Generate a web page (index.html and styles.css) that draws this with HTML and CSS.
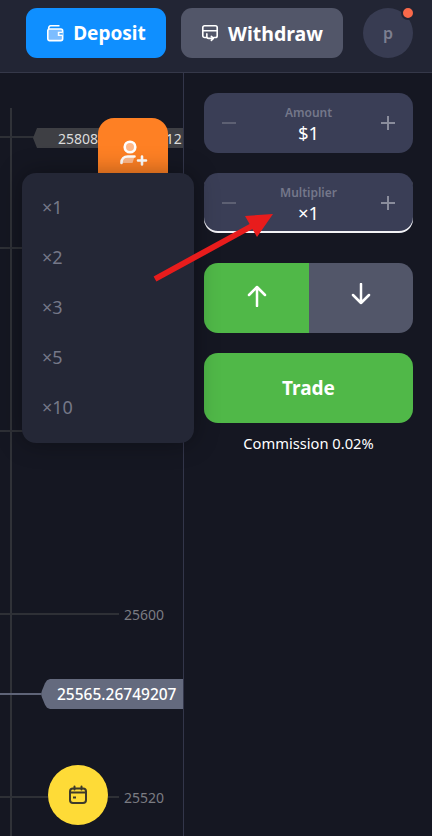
FILE: index.html
```html
<!DOCTYPE html>
<html lang="en">
<head>
<meta charset="utf-8">
<title>Trade</title>
<link rel="stylesheet" href="styles.css">
</head>
<body>
<div class="app">
  <header class="header">
    <button class="btn btn-blue">
      <svg class="btn-icon" viewBox="0 0 20 20" width="18" height="18" fill="none" stroke="#fff" stroke-width="1.800"><path d="M3 6.200V4.500C3 3.200 4 2 5 2h10"/><rect x="2" y="5.500" width="16.500" height="13" rx="2" fill="#7dbdff"/><path d="M18.500 9.500h-4.500v3h4.500" fill="#0f8fff"/></svg>
      <span>Deposit</span>
    </button>
    <button class="btn btn-gray">
      <svg class="btn-icon" viewBox="0 0 20 20" width="18" height="18" fill="none" stroke="#fff" stroke-width="1.800" stroke-linecap="round" stroke-linejoin="round"><path d="M6 15H4a2 2 0 0 1-2-2V4a2 2 0 0 1 2-2h12a2 2 0 0 1 2 2v9a2 2 0 0 1-2 2h-2"/><path d="M2 7.500h16"/><path d="M6.500 11v3a2 2 0 0 0 2 2h5"/><path d="M11.500 13.800l2.200 2.200-2.200 2.200"/></svg>
      <span>Withdraw</span>
    </button>
    <div class="avatar">p<span class="dot"></span></div>
  </header>
  <main class="main">
    <section class="chart">
      <div class="axis"></div>
      <div class="gridline g1"></div>
      <div class="gridline g2"></div>
      <div class="gridline g3"></div>
      <div class="gridline g4"></div>
      <div class="gridline g5"></div>
      <div class="tick t4">25600</div>
      <div class="tick t5">25520</div>
      <div class="tag tag-old">25808.9123456712</div>
      <div class="price-line"></div>
      <div class="tag tag-now">25565.26749207</div>
      <button class="invite">
        <svg viewBox="0 0 30 28" width="30" height="28" fill="none" stroke="#fff" stroke-width="2.600" stroke-linecap="round"><circle cx="12" cy="8" r="5.300" fill="#ffb98a"/><path d="M3.500 24v-.500c0-3.500 2.500-6 6-6h7l-2 6.500z" fill="#ffb98a" stroke="none"/><path d="M3.500 24v-.500c0-3.500 2.500-6 6-6h7"/><path d="M20 21.500h8M24 17.500v8"/></svg>
      </button>
      <button class="calendar">
        <svg viewBox="0 0 20 20" width="20" height="20" fill="none" stroke="#3d3a2b" stroke-width="2" stroke-linecap="round"><rect x="2" y="3.500" width="16" height="14.500" rx="3"/><path d="M2 7.500h16M6.500 1.500v3M13.500 1.500v3"/><rect x="5" y="11.500" width="3" height="2" fill="#3d3a2b" stroke="none"/></svg>
      </button>
    </section>
    <aside class="panel">
      <div class="stepper">
        <span class="step minus"></span>
        <div class="step-body"><span class="step-label">Amount</span><span class="step-value">$1</span></div>
        <span class="step plus"></span>
      </div>
      <div class="stepper stepper-open">
        <span class="step minus"></span>
        <div class="step-body"><span class="step-label">Multiplier</span><span class="step-value">×1</span></div>
        <span class="step plus"></span>
      </div>
      <div class="direction">
        <button class="dir dir-up">
          <svg viewBox="0 0 20 22" width="20" height="22" fill="none" stroke="#fff" stroke-width="2.500" stroke-linecap="round" stroke-linejoin="round"><path d="M10 21V2M2 10l8-8 8 8"/></svg>
        </button>
        <button class="dir dir-down">
          <svg viewBox="0 0 20 22" width="20" height="22" fill="none" stroke="#fff" stroke-width="2.500" stroke-linecap="round" stroke-linejoin="round"><path d="M10 1V20M2 12l8 8 8-8"/></svg>
        </button>
      </div>
      <button class="trade">Trade</button>
      <p class="commission">Commission 0.02%</p>
    </aside>
  </main>
  <ul class="menu">
    <li>×1</li>
    <li>×2</li>
    <li>×3</li>
    <li>×5</li>
    <li>×10</li>
  </ul>
  <svg class="arrow" viewBox="0 0 432 836" width="432" height="836"><path d="M153.600 276.400L249.600 223.900 245 216 273 214 257 237 252.400 229.100 156.400 281.600z" fill="#e81c1c"/></svg>
</div>
</body>
</html>
```

FILE: styles.css
```css
* { box-sizing: border-box; }
html, body { margin: 0; padding: 0; }
body {
  width: 432px;
  height: 836px;
  overflow: hidden;
  background: #151722;
  font-family: "Noto Sans", "Open Sans", sans-serif;
  color: #fff;
}
button { font-family: inherit; border: 0; padding: 0; color: inherit; }
.app { position: relative; width: 432px; height: 836px; display: flex; flex-direction: column; overflow: hidden; }

.header {
  flex: none;
  height: 73px;
  padding: 8px 19px 0 26px;
  display: flex;
  align-items: flex-start;
  background: #222534;
  border-bottom: 1px solid #353849;
}
.btn {
  height: 50px;
  border-radius: 11px;
  display: flex;
  align-items: center;
  justify-content: center;
  gap: 9px;
  font-size: 19px;
  font-weight: 700;
}
.btn-blue { width: 140px; background: #0f8fff; }
.btn-gray { width: 162px; margin-left: 15px; background: #525669; font-size: 19.500px; }
.avatar {
  position: relative;
  width: 50px;
  height: 50px;
  margin-left: 20px;
  border-radius: 50%;
  background: #383c52;
  color: #7c7f90;
  font-size: 16px;
  font-weight: 600;
  display: flex;
  align-items: center;
  justify-content: center;
}
.dot {
  position: absolute;
  top: -2px;
  right: -2px;
  width: 14px;
  height: 14px;
  border-radius: 50%;
  background: #f9694a;
  border: 2px solid #222534;
}

.main { flex: 1; display: flex; min-height: 0; }
.chart {
  position: relative;
  flex: none;
  width: 184px;
  border-right: 1px solid #33364a;
  overflow: hidden;
}
.axis { position: absolute; left: 10px; top: 35px; bottom: 0; width: 2px; background: #303238; }
.gridline { position: absolute; left: 0; width: 119px; height: 2px; background: #2e3036; }
.g1 { top: 63px; }
.g2 { top: 174px; }
.g3 { top: 357px; }
.g4 { top: 540px; }
.g5 { top: 723px; }
.tick {
  position: absolute;
  left: 124px;
  font-size: 14px;
  line-height: 16px;
  color: #7b7c82;
}
.t4 { top: 534px; }
.t5 { top: 717px; }
.tag {
  position: absolute;
  display: flex;
  align-items: center;
  color: #fff;
  white-space: nowrap;
  overflow: hidden;
}
.tag-old {
  left: 33px;
  top: 55px;
  width: 150px;
  height: 20px;
  padding-left: 25px;
  font-size: 14px;
  color: #dcdcdc;
  background: #3e3f44;
  clip-path: polygon(0 50%, 4px 0, 100% 0, 100% 100%, 4px 100%);
}
.price-line { position: absolute; left: 0; top: 620px; width: 41px; height: 2px; background: #5f6478; }
.tag-now {
  left: 41px;
  top: 606px;
  width: 142px;
  height: 30px;
  padding-left: 16px;
  font-size: 15.500px;
  font-weight: 500;
  background: #646a7e;
  clip-path: polygon(0 50%, 1px 38%, 4px 14%, 6px 4%, 9px 0, 100% 0, 100% 100%, 9px 100%, 6px 96%, 4px 86%, 1px 62%);
}
.invite {
  position: absolute;
  left: 98px;
  top: 45px;
  width: 70px;
  height: 70px;
  border-radius: 16px;
  background: #fe8024;
  display: flex;
  justify-content: center;
  padding-top: 21px;
}
.calendar {
  position: absolute;
  left: 48px;
  top: 692px;
  width: 60px;
  height: 60px;
  border-radius: 50%;
  background: #fedb37;
  display: flex;
  align-items: center;
  justify-content: center;
}

.panel {
  flex: 1;
  padding: 20px 19px 0 20px;
  display: flex;
  flex-direction: column;
}
.stepper {
  height: 60px;
  margin-bottom: 20px;
  padding: 0 18px;
  border-radius: 14px;
  background: #3a3e56;
  display: flex;
  align-items: center;
  justify-content: space-between;
}
.stepper-open { box-shadow: inset 0 -2px 0 #f2f2f5; margin-bottom: 30px; }
.step { position: relative; width: 14px; height: 14px; flex: none; }
.step::before,
.step::after { content: ""; position: absolute; background: #8a8d9c; }
.step::before { left: 0; right: 0; top: 6px; height: 2px; }
.plus::after { top: 0; bottom: 0; left: 6px; width: 2px; }
.minus::before { background: #5d6073; }
.minus::after { display: none; }
.step-body { display: flex; flex-direction: column; align-items: center; gap: 1px; padding-top: 2px; }
.step-label { font-size: 12px; line-height: 16px; font-weight: 600; color: #74778a; }
.step-value { font-size: 18.500px; line-height: 22px; color: #fff; }
.direction { height: 70px; margin-bottom: 20px; display: flex; border-radius: 14px; overflow: hidden; }
.dir { display: flex; align-items: center; justify-content: center; }
.dir-up { width: 105px; padding-bottom: 5px; background: #50b848; }
.dir-down { flex: 1; padding-bottom: 8px; background: #525669; }
.trade {
  height: 70px;
  border-radius: 14px;
  background: #50b848;
  font-size: 19px;
  font-weight: 700;
}
.commission { margin: 10px 0 0; text-align: center; font-size: 14.700px; line-height: 20px; }

.menu {
  position: absolute;
  left: 22px;
  top: 173px;
  width: 172px;
  height: 270px;
  margin: 0;
  padding: 9px 20px;
  list-style: none;
  border-radius: 14px;
  background: #242736;
  box-shadow: 0 0 24px rgba(0, 0, 0, .35);
  color: #757888;
  font-size: 18px;
}
.menu li { height: 50px; display: flex; align-items: center; }
.arrow { position: absolute; left: 0; top: 0; pointer-events: none; }
```
